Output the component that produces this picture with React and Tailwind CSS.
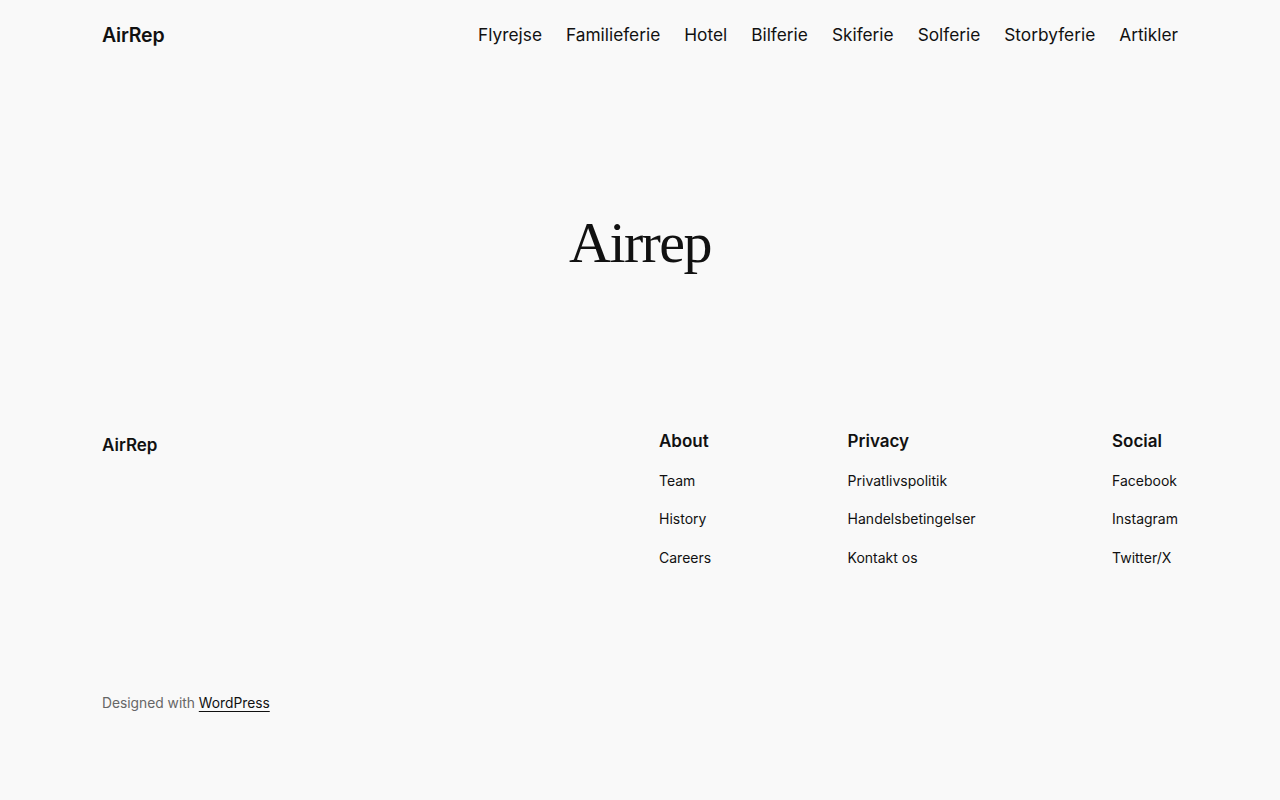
export default function App() {
  const nav = ["Flyrejse", "Familieferie", "Hotel", "Bilferie", "Skiferie", "Solferie", "Storbyferie", "Artikler"];
  const cols = [
    { h: "About", items: ["Team", "History", "Careers"] },
    { h: "Privacy", items: ["Privatlivspolitik", "Handelsbetingelser", "Kontakt os"] },
    { h: "Social", items: ["Facebook", "Instagram", "Twitter/X"] },
  ];
  return (
    <div className="min-h-[800px] bg-[#f9f9f9] text-[#111111]" style={{ fontFamily: "Inter, 'Noto Sans', sans-serif" }}>
      <header className="flex items-start justify-between px-[102px] pt-[22px] h-[70px]">
        <div className="pt-[1px] text-[19.5px] font-semibold leading-[24px] tracking-[-0.2px]">AirRep</div>
        <nav className="flex gap-[24px] text-[17.3px] leading-[26px]">
          {nav.map((n) => (
            <a key={n} className="text-[#111111]">{n}</a>
          ))}
        </nav>
      </header>
      <main className="flex h-[350px] items-center justify-center pt-[6px] pb-[10px]">
        <h1 className="text-[58px] leading-[1.2] text-[#111111]" style={{ fontFamily: "'Liberation Serif', 'DejaVu Serif', serif", letterSpacing: "-1.6px" }}>
          Airrep
        </h1>
      </main>
      <footer className="px-[102px] pt-[10px]">
        <div className="flex justify-between">
          <div className="pt-[3px] text-[17px] font-semibold leading-[24px]">AirRep</div>
          <div className="flex w-[519px] justify-between">
            {cols.map((c) => (
              <div key={c.h} className="flex flex-col">
                <div className="text-[17px] font-semibold leading-[22px]">{c.h}</div>
                <ul className="mt-[18.5px] flex flex-col gap-[18.5px] text-[14px] leading-[20px]">
                  {c.items.map((i) => (
                    <li key={i}>{i}</li>
                  ))}
                </ul>
              </div>
            ))}
          </div>
        </div>
        <div className="mt-[125px] text-[13.8px] leading-[20px] text-[#666666]">
          Designed with <a className="text-[#111111] underline underline-offset-[3px]">WordPress</a>
        </div>
      </footer>
    </div>
  );
}
